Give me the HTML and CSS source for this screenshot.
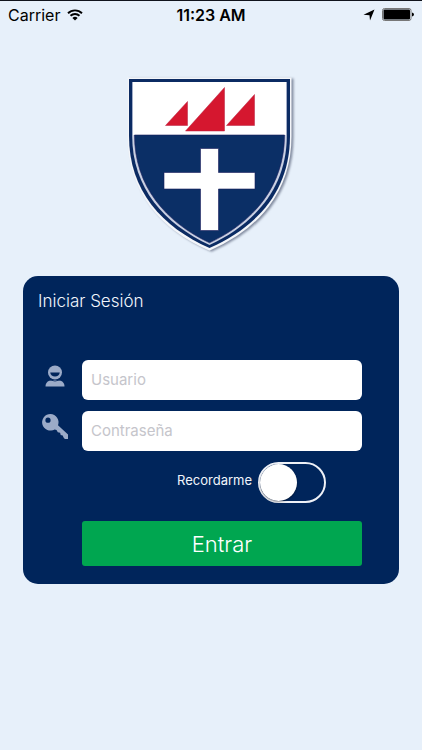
FILE: index.html
```html
<!DOCTYPE html>
<html lang="es">
<head>
<meta charset="utf-8">
<meta name="viewport" content="width=device-width, initial-scale=1">
<title>Iniciar Sesión</title>
<link rel="stylesheet" href="styles.css">
</head>
<body>
<header class="status">
  <div class="status-left">
    <span>Carrier</span>
    <svg class="wifi" viewBox="0 0 16 12" aria-hidden="true">
      <path d="M1 4.2a10 10 0 0 1 14 0M3.500 6.800a6.500 6.500 0 0 1 9 0" fill="none" stroke="#000" stroke-width="1.9"/>
      <path d="M5.400 8.900a3.800 3.800 0 0 1 5.200 0L8 11.600z"/>
    </svg>
  </div>
  <strong class="clock">11:23 AM</strong>
  <div class="status-right">
    <svg class="arrow" viewBox="0 0 12 12" aria-hidden="true"><path d="M11.500.5 7 11.500 6.500 6.200.5 5.800z"/></svg>
    <svg class="battery" viewBox="0 0 32 14" aria-hidden="true">
      <rect x=".5" y=".5" width="28.500" height="12" rx="2" fill="none" stroke="#777"/>
      <rect x="1.500" y="1.500" width="26.500" height="10" rx="1"/>
      <path d="M30 4.500q2 .6 2 2t-2 2z"/>
    </svg>
  </div>
</header>
<main class="login">
  <svg class="shield" viewBox="0 0 174 180" role="img" aria-label="Escudo">
    <path class="shield-edge" d="M4.500 4.500H166.500V62C166.500 118 133 155 85.500 175.500 38 155 4.500 118 4.500 62z"/>
    <path fill="#0b2b63" d="M5 5H166V62C166 117 133 153 85.500 174 38 153 5 117 5 62z"/>
    <path fill="#c9d0e2" d="M8.200 8H162.800V62C162.800 114 130.500 150 85.500 171 40.500 150 8.200 114 8.200 62z"/>
    <path fill="#fff" d="M9 8H162V61H9z"/>
    <path fill="#0b2f66" stroke="#1a1d5c" stroke-width=".6" d="M10.500 61H160.500C160.500 112 129.500 148 85.500 168.800 41.500 148 10.500 112 10.500 61z"/>
    <path fill="#fff" stroke="#1a1d5c" stroke-width=".6" d="M76.500 74.500h18v24H131v16.500H94.500v41.500h-18V115H40V98.500h36.500z"/>
    <path fill="#d5172f" stroke="#b82040" stroke-width=".5" d="M41.500 51.500H63.500V27.500zM61.500 57H100.500V13.500zM102.500 51.500H130.500V20.500z"/>
  </svg>
  <form class="card">
    <h1 class="title">Iniciar Sesión</h1>
    <div class="fields">
      <label class="icon" for="user" aria-label="Usuario">
        <svg viewBox="0 0 28 28" aria-hidden="true" fill="#9babc8">
          <circle cx="14" cy="10.500" r="7"/>
          <path d="M4.500 24.500c0-5 4-6 6-6.500h7c2 .5 6 1.500 6 6.500z"/>
          <path d="M9.200 10.500h9.600c-.3 2.700-2.300 4-4.800 4s-4.500-1.300-4.800-4z" fill="#00255b"/>
          <path d="M7.500 17.700q6.500 2.600 13 0" fill="none" stroke="#00255b" stroke-width=".9"/>
        </svg>
      </label>
      <input class="field" id="user" type="text" placeholder="Usuario">
      <label class="icon" for="pass" aria-label="Contraseña">
        <svg viewBox="0 0 28 28" aria-hidden="true" fill="#9babc8">
          <path fill-rule="evenodd" d="M9.500 1a8.300 8.300 0 1 0 4.200 15.400l1.800.6 1.300 2.300 2.300.5.600 2.200 2 .5 1 2.200 1.200 1.300H27v-4.500L17 12.200A8.300 8.300 0 0 0 9.500 1zM7 4.600a2.600 2.600 0 1 1 0 5.200 2.600 2.600 0 0 1 0-5.200z"/>
        </svg>
      </label>
      <input class="field" id="pass" type="password" placeholder="Contraseña">
    </div>
    <label class="remember">
      <span>Recordarme</span>
      <input class="toggle" type="checkbox" role="switch">
    </label>
    <button class="submit" type="submit">Entrar</button>
  </form>
</main>
</body>
</html>
```
FILE: styles.css
```css
* { box-sizing: border-box; }

body {
  margin: 0;
  min-height: 100vh;
  border-top: 1px solid #10131c;
  background: #e7f0fa;
  color: #000;
  font-family: Inter, "Liberation Sans", sans-serif;
}

.status {
  display: grid;
  grid-template-columns: 1fr auto 1fr;
  align-items: center;
  height: 28px;
  padding: 0 8px;
  font-size: 16px;
  line-height: 20px;
}

.status-left, .status-right { display: flex; align-items: center; gap: 7px; }
.status-right { justify-content: flex-end; }
.status svg { display: block; }
.clock { font-weight: 600; }
.wifi { width: 16px; height: 12px; }
.arrow { width: 12px; height: 12px; }
.battery { width: 32px; height: 14px; }

.login {
  display: flex;
  flex-direction: column;
  align-items: center;
  padding: 45px 23px 24px;
}

.shield { width: 174px; height: 180px; }
.shield-edge {
  fill: #fff;
  stroke: #f4f6fa;
  stroke-width: 2;
  filter: drop-shadow(2px 1px 1px rgba(30, 40, 70, .5));
}

.card {
  width: 100%;
  margin-top: 22px;
  padding: 15px 37px 18px 15px;
  border-radius: 15px;
  background: #00255b;
  color: #f1f5fb;
}

.title {
  margin: 0 0 49px;
  font-size: 17px;
  font-weight: 300;
  line-height: 20px;
}

.fields {
  display: grid;
  grid-template-columns: 34px 1fr;
  gap: 11px 10px;
}

.icon { display: grid; place-items: start center; padding-top: 2px; }
.icon svg { width: 28px; height: 28px; }

.field {
  width: 100%;
  height: 40px;
  padding: 0 9px 2px;
  border: 0;
  border-radius: 6px;
  background: #fff;
  color: #222;
  font: inherit;
  font-size: 15px;
}
.field::placeholder { color: #c5c5cb; opacity: 1; }

.remember {
  display: flex;
  align-items: center;
  justify-content: flex-end;
  gap: 6px;
  margin: 11px 36px 0 0;
  font-size: 13px;
  line-height: 16px;
}
.remember span { padding-bottom: 5px; }

.toggle {
  appearance: none;
  width: 68px;
  height: 41px;
  margin: 0;
  border: 2px solid #eef1f7;
  border-radius: 21px;
}
.toggle::before {
  content: "";
  display: block;
  width: 37px;
  height: 37px;
  border-radius: 50%;
  background: #fff;
  box-shadow: 0 1px 2px rgba(0, 0, 0, .4);
}
.toggle:checked { background: #00a650; }
.toggle:checked::before { margin-left: auto; }

.submit {
  display: block;
  width: calc(100% - 44px);
  height: 45px;
  margin: 18px 0 0 44px;
  border: 0;
  border-radius: 3px;
  background: #00a650;
  color: #fff;
  font: inherit;
  font-size: 22px;
  font-weight: 300;
}
```
